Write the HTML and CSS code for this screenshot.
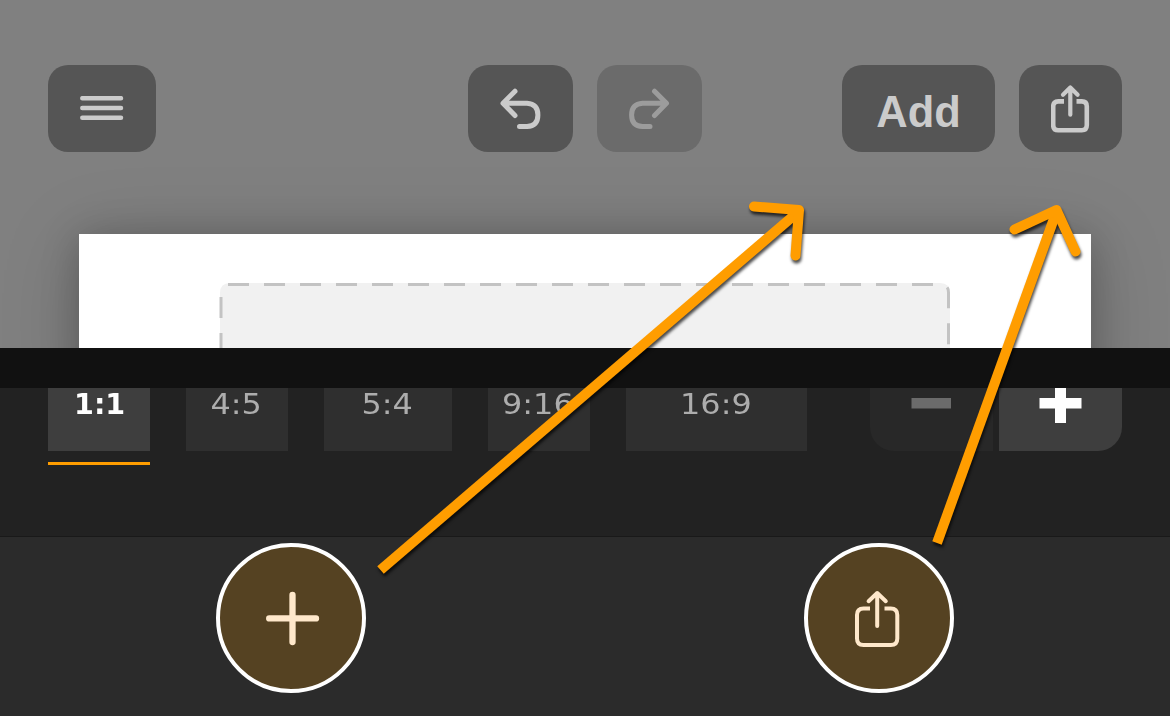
FILE: index.html
```html
<!DOCTYPE html>
<html lang="en">
<head>
<meta charset="utf-8">
<title>Canvas editor</title>
<link rel="stylesheet" href="styles.css">
</head>
<body>
<main class="screen">
  <section class="canvas">
    <header class="toolbar">
      <button class="tool menu" aria-label="Menu">
        <svg width="44" height="26" viewBox="0 0 44 26"><path d="M2.3 2.2H41M2.3 12H41M2.3 21.800H41" stroke-width="4.5"/></svg>
      </button>
      <div class="history">
        <button class="tool" aria-label="Undo">
          <svg width="42" height="42" viewBox="0 0 42 42"><path d="M15 3.200L3 15.300L15 27.500M4 15.300H27Q37.900 16 37.900 27Q37.900 38 27 38.500H19.500" stroke-width="5"/></svg>
        </button>
        <button class="tool off" aria-label="Redo">
          <svg width="42" height="42" viewBox="0 0 42 42"><path d="M25.500 3.200L37.500 15.300L25.500 27.500M36.500 15.300H13.500Q2.600 16 2.600 27Q2.600 38 13.500 38.500H21" stroke-width="5"/></svg>
        </button>
      </div>
      <div class="actions">
        <button class="tool add">Add</button>
        <button class="tool share" aria-label="Share">
          <svg width="40" height="50" viewBox="0 0 40 50"><path d="M13 17.400H7.200Q2.200 17.400 2.200 22.400V41Q2.200 46.200 7.200 46.200H30.800Q35.800 46.200 35.800 41V22.400Q35.800 17.400 30.800 17.400H25.500" stroke-width="4.600" stroke-linecap="butt"/><path d="M19.300 3.500V30.700M12 10.700L19.300 3.500L26.600 10.700" stroke-width="4.200"/></svg>
        </button>
      </div>
    </header>
    <div class="paper">
      <svg class="frame" width="732" height="66" viewBox="0 0 732 66">
        <path class="fill" d="M1 66V11Q1 1 11 1H721Q731 1 731 11V66"/>
        <path class="dash" d="M9 2.5H721.5Q729.5 2.5 729.5 10.5V66M2 15V66"/>
      </svg>
    </div>
  </section>
  <div class="divider"></div>
  <section class="ratios">
    <div class="ratio selected w1"><span>1:1</span></div>
    <div class="ratio w1"><span>4:5</span></div>
    <div class="ratio w2"><span>5:4</span></div>
    <div class="ratio w1"><span>9:16</span></div>
    <div class="ratio w3"><span>16:9</span></div>
    <div class="stepper">
      <div class="step minus"><svg width="123" height="63"><path d="M41.500 10h39.500v10.500H41.500z"/></svg></div>
      <div class="step plus"><svg width="123" height="63"><path d="M56 0h11v10h15.500v10.500H67V35H56V20.500H40.500V10H56z"/></svg></div>
    </div>
  </section>
  <footer class="bottom">
    <button class="round" aria-label="Add">
      <svg width="142" height="142" viewBox="220 547 142 142"><path d="M292.500 595V642M269.200 618.400H316" stroke-width="6.300"/></svg>
    </button>
    <button class="round" aria-label="Share">
      <svg width="142" height="142" viewBox="808 547 142 142"><path d="M870 608.500H863.500Q857 608.500 857 615V638.500Q857 645 863.500 645H890.800Q897.300 645 897.300 638.500V615Q897.300 608.500 890.800 608.500H884.500" stroke-width="4" stroke-linecap="butt"/><path d="M877.200 593V626M868.600 601.200L877.200 593L885.800 601.200" stroke-width="4"/></svg>
    </button>
  </footer>
  <svg class="arrows" width="1170" height="716" viewBox="0 0 1170 716">
    <path d="M380.500 570L798 212"/><path class="head" d="M754 206.500L799 210L795.500 255.500"/>
    <path d="M937 543L1056 213"/><path class="head" d="M1014.500 229.500L1056.500 210L1075.500 251.500"/>
  </svg>
</main>
</body>
</html>
```
FILE: styles.css
```css
* { box-sizing: border-box; }
body { margin: 0; background: #2b2b2b; font-family: "Liberation Sans", Arial, sans-serif; }
button { border: 0; padding: 0; font: inherit; }
svg { display: block; flex: none; }
.screen { position: relative; width: 1170px; height: 716px; overflow: hidden; display: flex; flex-direction: column; }

.canvas { height: 348px; flex: none; background: #808080; overflow: hidden; padding: 65px 48px 0; }
.toolbar { display: grid; grid-template-columns: 420px 374px 280px; height: 87px; }
.history { display: flex; gap: 24px; }
.actions { display: flex; gap: 24px; }
.tool { display: flex; align-items: center; justify-content: center; width: 105px; height: 87px; border-radius: 20px; background: #555; color: #cbcbcb; }
.tool svg, .round svg { fill: none; stroke: currentColor; stroke-linecap: round; stroke-linejoin: round; }
.menu { width: 108px; }
.tool.off { background: #6b6b6b; color: #9c9c9c; }
.add { width: 153px; font-size: 43.5px; font-weight: 700; line-height: 50px; padding-top: 7px; }
.share { width: 103px; }

.paper { width: 1012px; height: 160px; margin: 82px 0 0 31px; padding: 48px 0 0 140px; background: #fff; box-shadow: 0 10px 80px rgba(0, 0, 0, .18), 0 3px 36px rgba(0, 0, 0, .2); }
.frame .fill { fill: #f1f1f1; }
.frame .dash { fill: none; stroke: #c3c3c3; stroke-width: 3; stroke-dasharray: 21 15; }

.divider { height: 40px; flex: none; background: #111; }
.ratios { display: flex; height: 149px; flex: none; background: #222; border-bottom: 1px solid #191919; padding-left: 48px; gap: 36px; }
.ratio { height: 63px; background: #2f2f2f; color: #adadad; text-align: center; font: 27.5px/32px "DejaVu Sans", sans-serif; }
.ratio span { display: inline-block; margin-left: -2px; transform: scaleX(1.16); }
.w1 { width: 102px; }
.w2 { width: 128px; }
.w3 { width: 181px; }
.selected { height: 77px; color: #fff; font-weight: 700; background: linear-gradient(#ff9d00, #ff9d00) 0 100% / 100% 3px no-repeat, linear-gradient(#3e3e3e, #3e3e3e) 0 0 / 100% 63px no-repeat; }
.selected span { margin-left: 1px; transform: scaleX(1.04); }
.stepper { display: flex; gap: 6px; margin-left: 27px; }
.step { width: 123px; height: 63px; }
.minus { background: #282828; fill: #6b6b6b; border-bottom-left-radius: 24px; }
.plus { background: #3e3e3e; fill: #fff; border-bottom-right-radius: 24px; }

.bottom { flex: 1; display: flex; gap: 438px; padding: 6px 0 0 216px; background: #2b2b2b; }
.round { width: 150px; height: 150px; border: 4px solid #fff; border-radius: 50%; background: #554222; color: #ffe8cb; }

.arrows { position: absolute; inset: 0; fill: none; stroke: #ff9d00; stroke-width: 10; filter: drop-shadow(1px 3px 1.5px rgba(0, 0, 0, .7)); pointer-events: none; }
.arrows .head { stroke-linecap: round; stroke-linejoin: round; }
```
